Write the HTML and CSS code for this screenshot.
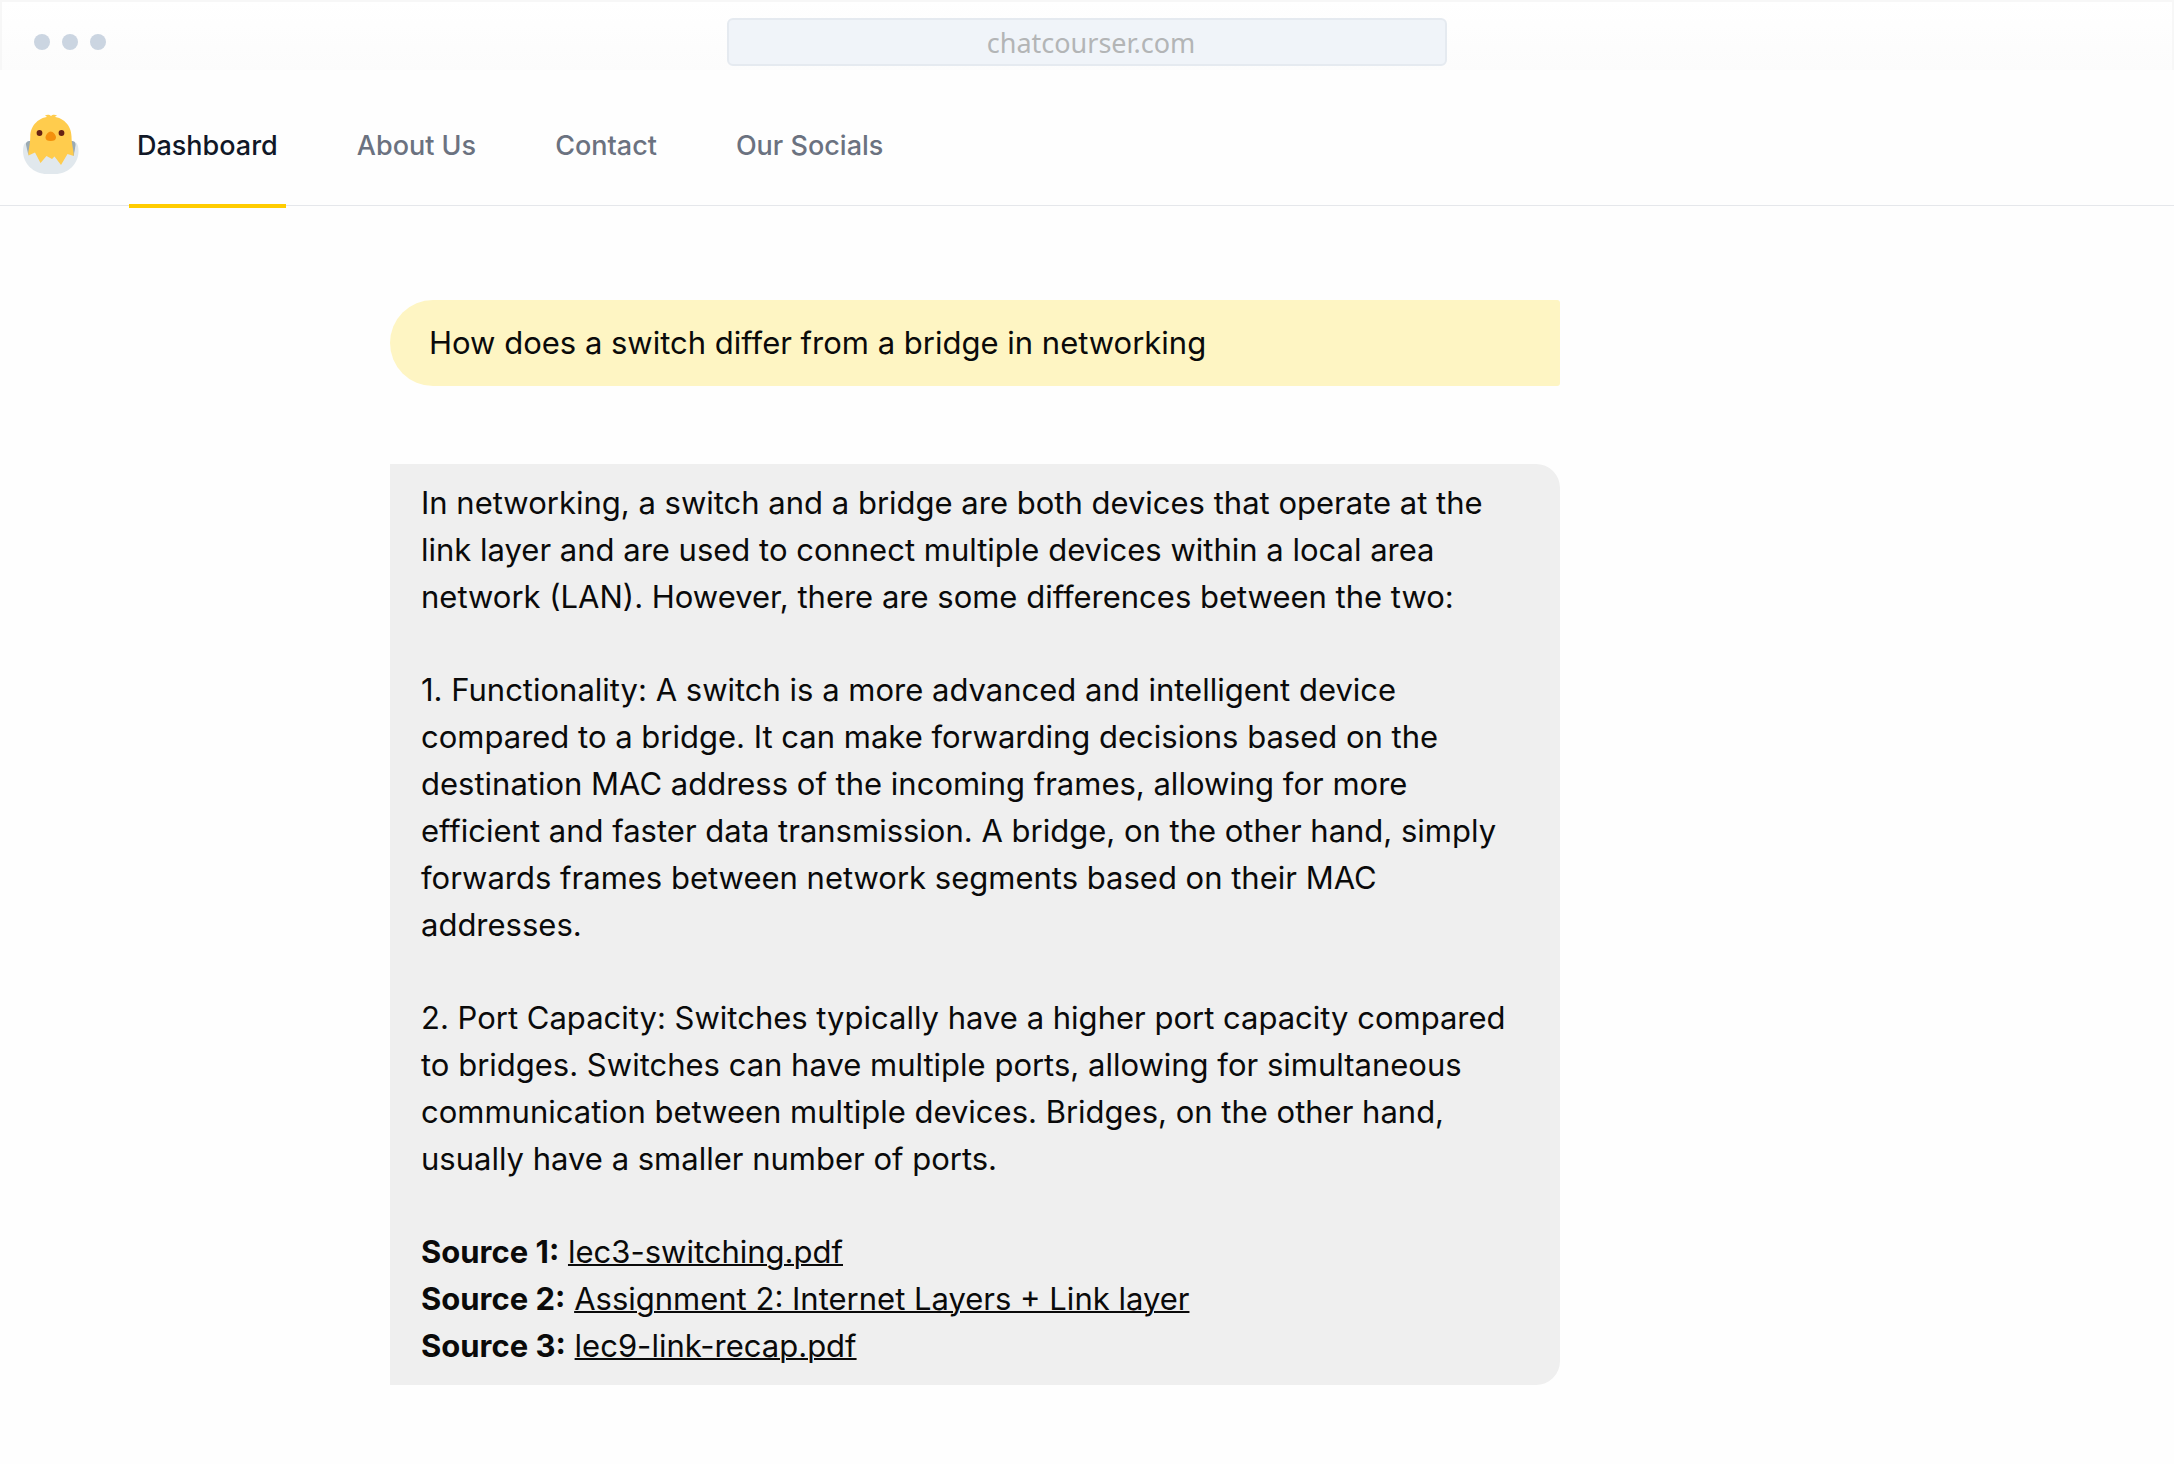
FILE: index.html
```html
<!DOCTYPE html>
<html lang="en">
<head>
<meta charset="utf-8">
<meta name="viewport" content="width=device-width, initial-scale=1">
<title>ChatCourser</title>
<link rel="stylesheet" href="styles.css">
</head>
<body>
<div class="browser-bar">
  <div class="dots"><span class="dot"></span><span class="dot"></span><span class="dot"></span></div>
  <input class="address" type="text" value="chatcourser.com" aria-label="Address">
</div>
<header class="site-header">
  <a class="logo" href="#" aria-label="Home">
    <svg width="56" height="60" viewBox="0 0 56 60" aria-hidden="true">
      <path fill="#9aaab4" d="M6 27C3.500 27.500 2.500 29 2.500 32L4 42l8 4h31l8-4l2-10c0-3-1-4.500-3.500-5z"/>
      <path fill="#ffcc4d" d="M28 2.500C16 2.500 7.300 11.500 7.300 22.500C7.300 31 4.500 38 5.500 44L12 54h32l6.500-10C51.500 38 48.500 31 48.500 22.500C48.500 11.500 40 2.500 28 2.500z"/>
      <path fill="#ffcc4d" d="M22 1.500C24 .6 26.500.5 28 2C29.500.5 32 .6 34 1.500C33 2.300 31.800 2.500 31 3.500L25 4C24 2.600 23 2.400 22 1.500z"/>
      <path fill="#e1e8ed" d="M2.500 28.500C.8 30 0 33 0 37c0 13 11 23 24 23h8C45 60 55.500 50 55.500 37c0-4-.8-7-2.500-8.500L50.800 42L44.500 40L38 51L31.500 42.500L29 45L23.500 42L17.500 49L12 38.500L5.500 41.500z"/>
      <circle cx="16.500" cy="19" r="2.900" fill="#662113"/>
      <circle cx="38.500" cy="19" r="2.900" fill="#662113"/>
      <path fill="#f4900c" d="M27.700 17.500C30 17.500 33 21 33 23.500S31 27 27.700 27S22.500 26 22.500 23.500S25.400 17.500 27.700 17.500z"/>
    </svg>
  </a>
  <nav class="nav">
    <a class="nav-link active" href="#" aria-current="page">Dashboard</a>
    <a class="nav-link" href="#">About Us</a>
    <a class="nav-link" href="#">Contact</a>
    <a class="nav-link" href="#">Our Socials</a>
  </nav>
</header>
<main class="chat">
  <div class="question">How does a switch differ from a bridge in networking</div>
  <article class="answer">
    <p>In networking, a switch and a bridge are both devices that operate at the link layer and are used to connect multiple devices within a local area network (LAN). However, there are some differences between the two:</p>
    <p>1. Functionality: A switch is a more advanced and intelligent device compared to a bridge. It can make forwarding decisions based on the destination MAC address of the incoming frames, allowing for more efficient and faster data transmission. A bridge, on the other hand, simply forwards frames between network segments based on their MAC addresses.</p>
    <p>2. Port Capacity: Switches typically have a higher port capacity compared to bridges. Switches can have multiple ports, allowing for simultaneous communication between multiple devices. Bridges, on the other hand, usually have a smaller number of ports.</p>
    <ul class="sources">
      <li><strong>Source 1:</strong> <a href="#">lec3-switching.pdf</a></li>
      <li><strong>Source 2:</strong> <a href="#">Assignment 2: Internet Layers + Link layer</a></li>
      <li><strong>Source 3:</strong> <a href="#">lec9-link-recap.pdf</a></li>
    </ul>
  </article>
</main>
</body>
</html>
```
FILE: styles.css
```css
* { box-sizing: border-box; }

body {
  margin: 0;
  background: #fefefe;
  color: #0a0a0a;
  font-family: Inter, "Liberation Sans", sans-serif;
}

.browser-bar {
  display: grid;
  grid-template-columns: 1fr minmax(0, 720px) 1fr;
  align-items: center;
  height: 70px;
  padding: 12px 32px 0;
  border: 2px solid #f7f7f7;
  border-bottom: 0;
  background: linear-gradient(#ffffff, #fcfcfc);
}

.dots { display: flex; gap: 12px; }

.dot {
  width: 16px;
  height: 16px;
  border-radius: 50%;
  background: #cbd5e1;
}

.address {
  width: 100%;
  height: 48px;
  padding: 0 0 0 8px;
  border: 2px solid #e5eaf0;
  border-radius: 6px;
  background: #f0f4f9;
  color: #b3b5b6;
  font: 27px/32px "Noto Sans", sans-serif;
  text-align: center;
}

.site-header {
  display: flex;
  height: 136px;
  padding: 0 23px;
  border-bottom: 1px solid #e5e7eb;
}

.logo {
  height: 60px;
  margin: 44px 50px 0 0;
}

.nav { display: flex; gap: 63px; }

.nav-link {
  height: 138px;
  padding: 0 8px;
  border-bottom: 4px solid transparent;
  color: #6b7280;
  font-size: 27px;
  font-weight: 500;
  line-height: 151px;
  text-decoration: none;
}

.nav-link.active {
  border-color: #ffcc00;
  color: #111827;
}

.chat {
  display: flex;
  flex-direction: column;
  gap: 78px;
  max-width: 1560px;
  padding: 94px 0 80px 390px;
  font-size: 31px;
  line-height: 47px;
}

.question {
  padding: 19px 39px 20px;
  border-radius: 44px 3px 3px 44px;
  background: #fef5c3;
}

.answer {
  display: flex;
  flex-direction: column;
  gap: 46px;
  padding: 15px 31px 16px;
  border-radius: 0 24px 24px 0;
  background: #efefef;
}

.answer p { margin: 0; }

.sources {
  margin: 0;
  padding: 0;
  list-style: none;
}

.sources a {
  color: inherit;
  text-decoration-thickness: 2px;
}
```
